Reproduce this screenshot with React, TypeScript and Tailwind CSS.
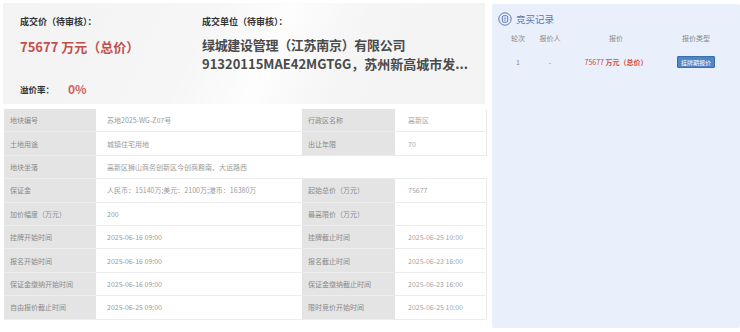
import React from "react";

const font = { fontFamily: '"Noto Sans CJK SC", "Noto Sans", sans-serif' };

type Row = { l1: string; v1: string; l2?: string; v2?: string; span?: boolean };

const rows: Row[] = [
  { l1: "地块编号", v1: "苏地2025-WG-Z07号", l2: "行政区名称", v2: "高新区" },
  { l1: "土地用途", v1: "城镇住宅用地", l2: "出让年限", v2: "70" },
  { l1: "地块坐落", v1: "高新区狮山商务创新区今创商務南、大运路西", span: true },
  { l1: "保证金", v1: "人民币：15140万;美元：2100万;港币：16380万", l2: "起始总价（万元）", v2: "75677" },
  { l1: "加价幅度（万元）", v1: "200", l2: "最高限价（万元）", v2: "" },
  { l1: "挂牌开始时间", v1: "2025-06-16 09:00", l2: "挂牌截止时间", v2: "2025-06-25 10:00" },
  { l1: "报名开始时间", v1: "2025-06-16 09:00", l2: "报名截止时间", v2: "2025-06-23 16:00" },
  { l1: "保证金缴纳开始时间", v1: "2025-06-16 09:00", l2: "保证金缴纳截止时间", v2: "2025-06-23 16:00" },
  { l1: "自由报价截止时间", v1: "2025-06-25 09:00", l2: "限时竞价开始时间", v2: "2025-06-25 10:00" },
];

export default function App() {
  return (
    <div className="w-[740px] h-[332px] bg-white flex overflow-hidden" style={font}>
      {/* Left */}
      <div className="w-[488px] flex flex-col">
        <div className="h-[101px] mx-[3px] mt-[3px] bg-[linear-gradient(115deg,#f3f3f3_0%,#f6f6f6_40%,#fdfdfd_55%,#f5f5f5_70%,#f3f3f3_100%)] flex px-[17px] pt-[12px]">
          <div className="w-[185px] flex flex-col">
            <div className="text-[9px] font-bold text-[#333] leading-[14px]">成交价（待审核）：</div>
            <div className="mt-[9px] text-[13px] font-bold text-[#c0504d] leading-[18px]">75677 万元（总价）</div>
            <div className="mt-[25px] flex items-center">
              <span className="text-[8.5px] font-bold text-[#333] leading-[14px]">溢价率：</span>
              <span className="ml-[14px] text-[12px] font-bold text-[#d0605c] leading-[16px]">0%</span>
            </div>
          </div>
          <div className="flex flex-col">
            <div className="text-[9px] font-bold text-[#333] leading-[14px]">成交单位（待审核）：</div>
            <div className="mt-[6px] text-[13px] font-bold text-[#4a4a4a] leading-[19px] tracking-[-0.3px] whitespace-nowrap">绿城建设管理（江苏南京）有限公司</div>
            <div className="text-[13px] font-bold text-[#4a4a4a] leading-[19px] tracking-[0px] whitespace-nowrap">91320115MAE42MGT6G，苏州新高城市发...</div>
          </div>
        </div>
        <div className="mt-[5px] ml-[4px] w-[483px] grid grid-cols-[92px_206px_93px_92px] text-[7px] leading-[10px]">
          {rows.map((r, i) => (
            <React.Fragment key={i}>
              <div className="h-[23.4px] bg-[#e4e4e4] text-[#8a8a8a] flex items-center pl-[6px] border-b border-[#ececec]">{r.l1}</div>
              {r.span ? (
                <div className="col-span-3 h-[23.4px] bg-white text-[#9a9a9a] flex items-center pl-[11px] border-b border-[#ececec]">{r.v1}</div>
              ) : (
                <>
                  <div className="h-[23.4px] bg-white text-[#9a9a9a] flex items-center pl-[11px] border-b border-[#ececec]">{r.v1}</div>
                  <div className="h-[23.4px] bg-[#e4e4e4] text-[#8a8a8a] flex items-center pl-[6px] border-b border-[#ececec]">{r.l2}</div>
                  <div className="h-[23.4px] bg-white text-[#a5a5a5] flex items-center pl-[13px] border-b border-r border-[#ececec]">{r.v2}</div>
                </>
              )}
            </React.Fragment>
          ))}
        </div>
      </div>
      {/* Right */}
      <div className="ml-[4px] mt-[4px] mb-[4px] flex-1 bg-[#e9effb] rounded-[2px] flex flex-col pt-[8px]">
        <div className="flex items-center pl-[6px]">
          <svg width="14" height="14" viewBox="0 0 14 14" fill="none">
            <circle cx="7" cy="7" r="6.2" stroke="#5a7ab5" strokeWidth="1" />
            <rect x="4.3" y="3.8" width="5.4" height="6.4" rx="1.2" stroke="#5a7ab5" strokeWidth="1" />
            <path d="M5.8 6.2h2.4M5.8 8h2" stroke="#5a7ab5" strokeWidth="0.8" />
          </svg>
          <span className="ml-[4px] text-[9.5px] text-[#5a78b0] leading-[14px]">竞买记录</span>
        </div>
        <div className="flex text-[7px] text-[#8a8a8a] leading-[10px] mt-[7px]">
          <span className="w-[38px] text-center pl-[14px]">轮次</span>
          <span className="w-[32px] text-center ml-[4px]">报价人</span>
          <span className="w-[100px] text-center">报价</span>
          <span className="w-[60px] text-center">报价类型</span>
        </div>
        <div className="flex items-center text-[7px] leading-[10px] mt-[13px]">
          <span className="w-[38px] text-center pl-[14px] text-[#888]">1</span>
          <span className="w-[32px] text-center ml-[4px] text-[#888]">-</span>
          <span className="w-[100px] text-center text-[#d04a45]">
            75677 <span className="font-bold">万元（总价）</span>
          </span>
          <span className="w-[60px] flex justify-center">
            <span className="bg-[#4f86c6] text-white text-[6px] leading-[9px] px-[3px] py-[0.5px] rounded-[1px] border border-[#3a6fae]">挂牌期报价</span>
          </span>
        </div>
      </div>
    </div>
  );
}
